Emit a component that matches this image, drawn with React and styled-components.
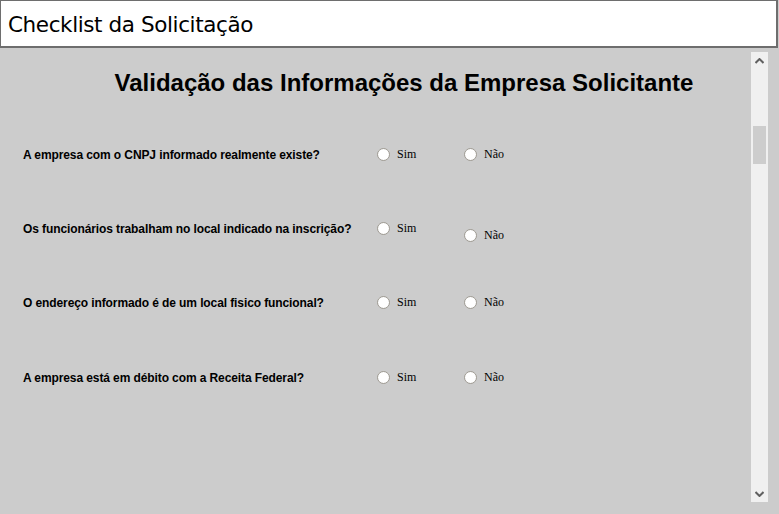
import React from "react";
import styled, { createGlobalStyle } from "styled-components";

const Global = createGlobalStyle`
  html, body { margin: 0; padding: 0; background: #cccccc; }
  body { width: 779px; height: 514px; overflow: hidden; }
`;

const Page = styled.div`
  width: 779px;
  height: 514px;
  display: flex;
  flex-direction: column;
  background: #cccccc;
`;

const Header = styled.div`
  box-sizing: border-box;
  height: 48px;
  width: 778px;
  background: #ffffff;
  border-top: 1px solid #6e6e6e;
  border-left: 1px solid #6e6e6e;
  border-right: 2px solid #6e6e6e;
  border-bottom: 2px solid #6e6e6e;
  display: flex;
  align-items: center;
  padding-left: 7px;
  padding-top: 2px;
  font-family: "Comic Sans MS", "DejaVu Sans", sans-serif;
  font-size: 21.5px;
  letter-spacing: -0.4px;
  color: #000;
`;

const Frame = styled.div`
  flex: 1;
  display: flex;
  padding: 4px 11px 12px 0;
  min-height: 0;
`;

const Content = styled.div`
  flex: 1;
  display: flex;
  flex-direction: column;
`;

const Title = styled.h1`
  margin: 17px 0 20px 58px;
  font-family: "Liberation Sans", Arial, sans-serif;
  font-weight: bold;
  font-size: 24px;
  line-height: 28px;
  text-align: center;
  color: #000;
`;

const Row = styled.div`
  height: ${(p) => p.$height}px;
  display: flex;
  align-items: center;
`;

const Question = styled.div`
  width: 354px;
  padding-left: 23px;
  font-family: "Liberation Sans", Arial, sans-serif;
  font-weight: bold;
  font-size: 12px;
  line-height: 14px;
  letter-spacing: -0.1px;
  color: #000;
`;

const Option = styled.label`
  display: flex;
  align-items: center;
  width: ${(p) => p.$width}px;
  margin-top: ${(p) => p.$offset || 0}px;
  font-family: "Liberation Serif", "Times New Roman", serif;
  font-size: 12px;
  color: #000;
`;

const Radio = styled.span`
  box-sizing: border-box;
  width: 13px;
  height: 13px;
  border-radius: 50%;
  border: 1px solid #a09c94;
  background: radial-gradient(circle at 50% 50%, #ffffff 55%, #f2f2f2 100%);
  margin-right: 7px;
  flex: none;
`;

const Scrollbar = styled.div`
  width: 17px;
  margin-left: 1px;
  background: #f0f0f0;
  display: flex;
  flex-direction: column;
  align-items: center;
`;

const Arrow = styled.div`
  height: 17px;
  width: 17px;
  display: flex;
  align-items: center;
  justify-content: center;
`;

const Track = styled.div`
  flex: 1;
  width: 100%;
  display: flex;
  flex-direction: column;
  align-items: center;
  padding-top: 57px;
`;

const Thumb = styled.div`
  width: 13px;
  height: 38px;
  background: #cdcdcd;
`;

const questions = [
  { q: "A empresa com o CNPJ informado realmente existe?", off: 0, h: 75 },
  { q: "Os funcionários trabalham no local indicado na inscrição?", off: 14, h: 73 },
  { q: "O endereço informado é de um local fisico funcional?", off: 0, h: 75 },
  { q: "A empresa está em débito com a Receita Federal?", off: 0, h: 75 },
];

const Chevron = ({ up }) => (
  <svg width="9" height="6" viewBox="0 0 9 6">
    <path
      d={up ? "M0.5 5 L4.5 1 L8.5 5" : "M0.5 1 L4.5 5 L8.5 1"}
      fill="none"
      stroke="#606060"
      strokeWidth="2"
    />
  </svg>
);

export default function App() {
  return (
    <Page>
      <Global />
      <Header>Checklist da Solicitação</Header>
      <Frame>
        <Content>
          <Title>Validação das Informações da Empresa Solicitante</Title>
          {questions.map((item, i) => (
            <Row key={i} $height={item.h}>
              <Question>{item.q}</Question>
              <Option $width={87}>
                <Radio />
                Sim
              </Option>
              <Option $width={80} $offset={item.off}>
                <Radio />
                Não
              </Option>
            </Row>
          ))}
        </Content>
        <Scrollbar>
          <Arrow>
            <Chevron up />
          </Arrow>
          <Track>
            <Thumb />
          </Track>
          <Arrow>
            <Chevron />
          </Arrow>
        </Scrollbar>
      </Frame>
    </Page>
  );
}
